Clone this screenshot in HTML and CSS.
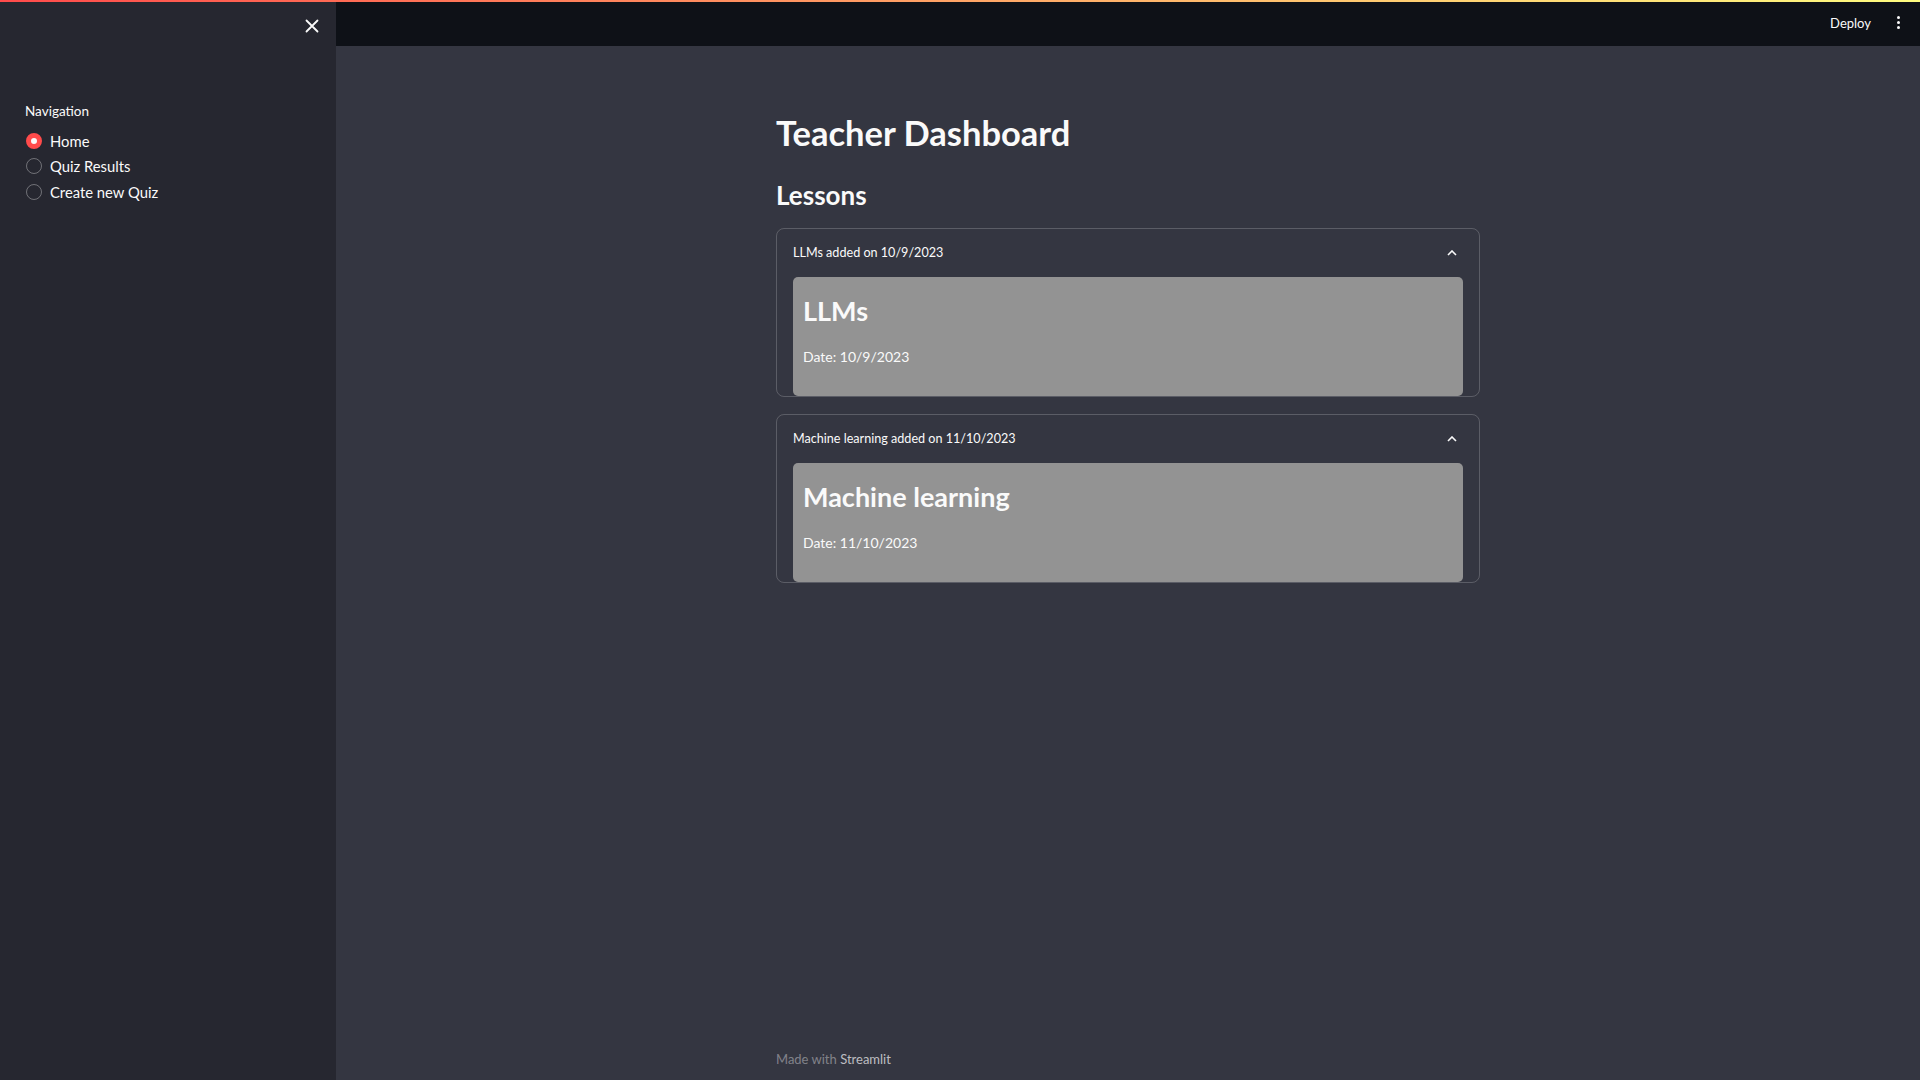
FILE: index.html
```html
<!DOCTYPE html>
<html lang="en">

<head>
  <meta charset="UTF-8">
  <meta name="viewport" content="width=device-width, initial-scale=1.0">
  <title>Teacher Dashboard</title>
  <link rel="stylesheet" href="styles.css">
</head>

<body>
  <div class="decoration"></div>
  <div class="app">
    <!-- Sidebar -->
    <aside class="sidebar">
      <div class="sidebar-top">
        <button class="close-btn" aria-label="Close sidebar">
          <svg width="14" height="14" viewBox="0 0 14 14">
            <path d="M1.5 1.5 L12.5 12.5 M12.5 1.5 L1.5 12.5" stroke="#fafafa" stroke-width="1.8" stroke-linecap="round" />
          </svg>
        </button>
      </div>
      <div class="nav">
        <p class="nav-label">Navigation</p>
        <label class="radio checked"><span class="radio-dot"></span>Home</label>
        <label class="radio"><span class="radio-dot"></span>Quiz Results</label>
        <label class="radio"><span class="radio-dot"></span>Create new Quiz</label>
      </div>
    </aside>

    <!-- Main -->
    <div class="main">
      <header class="topbar">
        <span class="deploy">Deploy</span>
        <span class="kebab"><i></i><i></i><i></i></span>
      </header>

      <div class="block">
        <h1 class="title">Teacher Dashboard</h1>
        <h2 class="header">Lessons</h2>

        <div class="expander">
          <div class="expander-head">
            <span>LLMs added on 10/9/2023</span>
            <svg class="chevron" width="10" height="6" viewBox="0 0 10 6">
              <path d="M1 5 L5 1 L9 5" fill="none" stroke="#fafafa" stroke-width="1.6" />
            </svg>
          </div>
          <div class="expander-body">
            <div class="lesson">
              <h2>LLMs</h2>
              <p>Date: 10/9/2023</p>
            </div>
          </div>
        </div>

        <div class="expander">
          <div class="expander-head">
            <span>Machine learning added on 11/10/2023</span>
            <svg class="chevron" width="10" height="6" viewBox="0 0 10 6">
              <path d="M1 5 L5 1 L9 5" fill="none" stroke="#fafafa" stroke-width="1.6" />
            </svg>
          </div>
          <div class="expander-body">
            <div class="lesson">
              <h2>Machine learning</h2>
              <p>Date: 11/10/2023</p>
            </div>
          </div>
        </div>
      </div>

      <footer class="footer">Made with <span>Streamlit</span></footer>
    </div>
  </div>
</body>

</html>
```

FILE: styles.css
```css
* {
  box-sizing: border-box;
}

html,
body {
  margin: 0;
  padding: 0;
  height: 100%;
}

body {
  font-family: 'Lato', 'Noto Sans', sans-serif;
  color: #fafafa;
  background-color: #343641;
  display: flex;
  flex-direction: column;
  overflow: hidden;
}

.decoration {
  height: 2px;
  flex-shrink: 0;
  background: linear-gradient(90deg, #ff4b4b, #fffd80);
}

.app {
  flex: 1;
  display: flex;
  min-height: 0;
}

/* Sidebar */
.sidebar {
  width: 336px;
  flex-shrink: 0;
  background-color: #262730;
}

.sidebar-top {
  display: flex;
  justify-content: flex-end;
  padding: 16px 12px 0 0;
}

.close-btn {
  background: none;
  border: none;
  padding: 0;
  width: 24px;
  height: 16px;
  display: flex;
  align-items: center;
  justify-content: center;
  cursor: pointer;
}

.nav {
  padding: 68px 24px 0 25px;
}

.nav-label {
  margin: 0 0 8px;
  font-size: 13.5px;
  line-height: 18px;
}

.radio {
  display: flex;
  align-items: center;
  gap: 8px;
  height: 25.5px;
  font-size: 14.8px;
  cursor: pointer;
}

.radio-dot {
  width: 16px;
  height: 16px;
  border-radius: 50%;
  border: 1px solid rgba(250, 250, 250, 0.35);
  margin-left: 1px;
}

.radio.checked .radio-dot {
  border: 5px solid #ff4b4b;
  background-color: #fafafa;
}

/* Main area */
.main {
  flex: 1;
  display: flex;
  flex-direction: column;
}

.topbar {
  height: 44px;
  flex-shrink: 0;
  background-color: #0e1117;
  display: flex;
  align-items: center;
  justify-content: flex-end;
  padding: 0 20px 0 0;
  gap: 26px;
}

.deploy {
  font-size: 13px;
  margin-top: -2px;
}

.kebab {
  display: flex;
  flex-direction: column;
  gap: 2px;
  margin-top: -3px;
}

.kebab i {
  width: 3px;
  height: 3px;
  border-radius: 50%;
  background-color: #fafafa;
}

.block {
  width: 704px;
  margin: 0 auto;
  padding-top: 65px;
}

.title {
  margin: 0;
  font-size: 34.5px;
  line-height: 44px;
  font-weight: 700;
}

.header {
  margin: 23px 0 16px;
  font-size: 26px;
  line-height: 34px;
  font-weight: 700;
}

.expander {
  border: 1px solid rgba(250, 250, 250, 0.2);
  border-radius: 8px;
  margin-bottom: 17px;
}

.expander-head {
  display: flex;
  justify-content: space-between;
  align-items: center;
  height: 48px;
  padding: 0 22px 1px 16px;
  font-size: 12.6px;
}

.expander-body {
  padding: 0 16px;
}

.lesson {
  background-color: #939393;
  border-radius: 5px;
  padding: 14px 10px 27px;
}

.lesson h2 {
  margin: 0;
  font-size: 27px;
  line-height: 40px;
  font-weight: 700;
}

.lesson p {
  margin: 14px 0 0;
  font-size: 14px;
  line-height: 24px;
}

.footer {
  width: 704px;
  margin: auto auto 0;
  padding-bottom: 13px;
  font-size: 13px;
  color: rgba(250, 250, 250, 0.4);
}

.footer span {
  color: rgba(250, 250, 250, 0.7);
}
```
